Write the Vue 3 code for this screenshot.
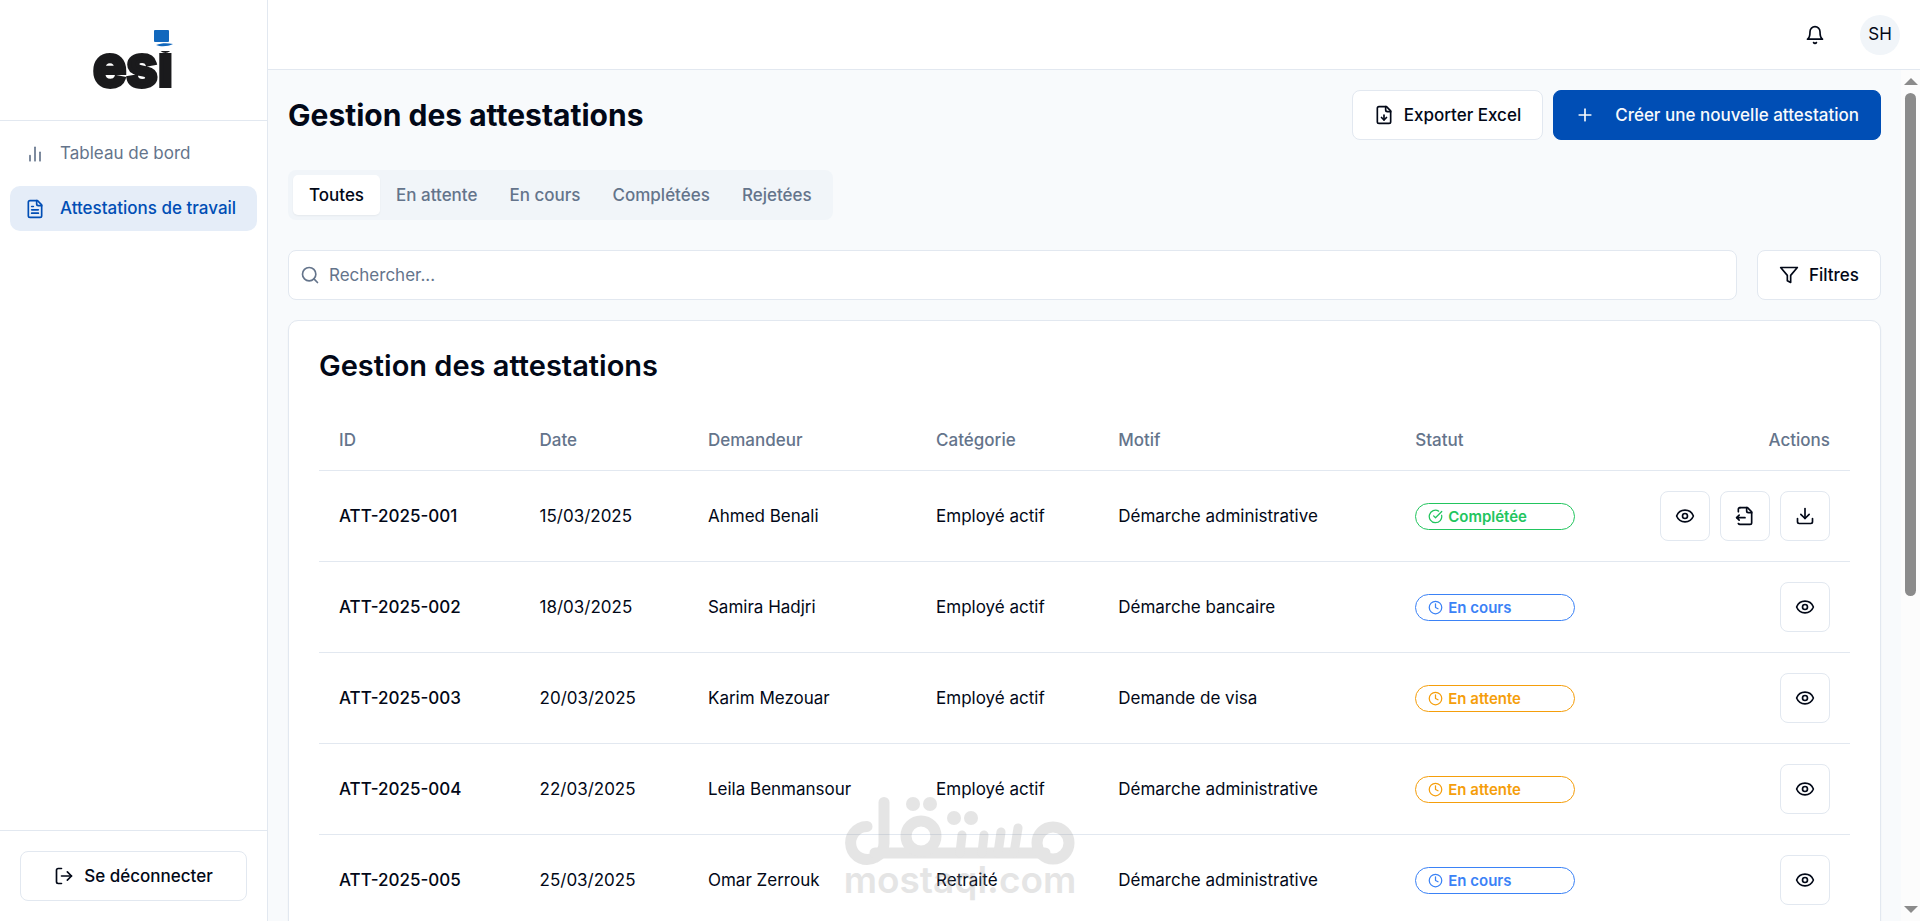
<template>
    <div class="layout">
        <aside class="sidebar">
            <div class="brand">
                <svg class="logo" viewBox="0 0 90 80" role="img" aria-label="esi">
                    <text x="4" y="66" class="logo-text">esi</text>
                    <rect x="64" y="6" width="24" height="25" fill="#fff" />
                    <rect x="65" y="10" width="15" height="12" rx="1" fill="#1268bd" />
                    <path d="M67 25c6-2.500 12-2 17-1-5 2.500-12 3-17 1z" fill="#1268bd" />
                </svg>
            </div>
            <nav class="nav">
                <a v-for="link in links" :key="link.label" href="#" class="nav-link" :class="{ active: link.active }">
                    <svg class="icon" viewBox="0 0 24 24">
                        <path v-for="d in icons[link.icon]" :key="d" :d="d" />
                    </svg>
                    {{ link.label }}
                </a>
            </nav>
            <div class="sidebar-footer">
                <button type="button" class="btn btn-block">
                    <svg class="icon" viewBox="0 0 24 24">
                        <path v-for="d in icons.logout" :key="d" :d="d" />
                    </svg>
                    Se déconnecter
                </button>
            </div>
        </aside>

        <div class="page">
            <header class="topbar">
                <button type="button" class="bell" aria-label="Notifications">
                    <svg class="icon" viewBox="0 0 24 24">
                        <path v-for="d in icons.bell" :key="d" :d="d" />
                    </svg>
                </button>
                <button type="button" class="avatar">SH</button>
            </header>

            <div class="body">
                <main class="content">
                    <div class="heading">
                        <h1>Gestion des attestations</h1>
                        <div class="heading-actions">
                            <button type="button" class="btn">
                                <svg class="icon" viewBox="0 0 24 24">
                                    <path v-for="d in icons.fileDown" :key="d" :d="d" />
                                </svg>
                                Exporter Excel
                            </button>
                            <button type="button" class="btn btn-primary">
                                <svg class="icon" viewBox="0 0 24 24">
                                    <path v-for="d in icons.plus" :key="d" :d="d" />
                                </svg>
                                Créer une nouvelle attestation
                            </button>
                        </div>
                    </div>

                    <div class="tabs" role="tablist">
                        <button v-for="tab in tabs" :key="tab" type="button" role="tab" class="tab"
                            :class="{ active: tab === activeTab }" :aria-selected="tab === activeTab"
                            @click="activeTab = tab">
                            {{ tab }}
                        </button>
                    </div>

                    <div class="toolbar">
                        <label class="search">
                            <svg class="icon" viewBox="0 0 24 24">
                                <circle cx="11" cy="11" r="8" />
                                <path d="m21 21-4.300-4.300" />
                            </svg>
                            <input v-model="search" type="search" placeholder="Rechercher..." aria-label="Rechercher">
                        </label>
                        <button type="button" class="btn">
                            <svg class="icon" viewBox="0 0 24 24">
                                <path v-for="d in icons.filter" :key="d" :d="d" />
                            </svg>
                            Filtres
                        </button>
                    </div>

                    <section class="card">
                        <h2>Gestion des attestations</h2>
                        <table class="table">
                            <colgroup>
                                <col class="col-id">
                                <col class="col-date">
                                <col class="col-name">
                                <col class="col-category">
                                <col class="col-reason">
                                <col class="col-status">
                                <col>
                            </colgroup>
                            <thead>
                                <tr>
                                    <th>ID</th>
                                    <th>Date</th>
                                    <th>Demandeur</th>
                                    <th>Catégorie</th>
                                    <th>Motif</th>
                                    <th>Statut</th>
                                    <th class="right">Actions</th>
                                </tr>
                            </thead>
                            <tbody>
                                <tr v-for="row in rows" :key="row.id">
                                    <td class="id">{{ row.id }}</td>
                                    <td>{{ row.date }}</td>
                                    <td>{{ row.name }}</td>
                                    <td>{{ row.category }}</td>
                                    <td>{{ row.reason }}</td>
                                    <td>
                                        <span class="badge" :class="statuses[row.status].color">
                                            <svg class="icon" viewBox="0 0 24 24">
                                                <path v-for="d in icons[statuses[row.status].icon]" :key="d" :d="d" />
                                            </svg>
                                            {{ row.status }}
                                        </span>
                                    </td>
                                    <td>
                                        <div class="row-actions">
                                            <button v-for="action in statuses[row.status].actions" :key="action.icon"
                                                type="button" class="btn btn-icon" :aria-label="action.label">
                                                <svg class="icon" viewBox="0 0 24 24">
                                                    <path v-for="d in icons[action.icon]" :key="d" :d="d" />
                                                </svg>
                                            </button>
                                        </div>
                                    </td>
                                </tr>
                            </tbody>
                        </table>
                    </section>
                </main>

                <div class="scrollbar" aria-hidden="true">
                    <span class="arrow arrow-up"></span>
                    <div class="track">
                        <div class="thumb"></div>
                    </div>
                    <span class="arrow arrow-down"></span>
                </div>
            </div>
        </div>

        <div class="watermark">
            <svg viewBox="0 0 230 68">
                <g fill="none" stroke="currentColor" stroke-linecap="round" stroke-width="11">
                    <path d="M22 29.500a16.500 16.500 0 1 0 8 31c6-3 9-8 9-14V5.500" />
                    <path d="M30 56H200" />
                    <circle cx="76" cy="39" r="15" />
                    <circle cx="208" cy="46" r="16" />
                    <path d="M117 38l-2 18M139 38l-2 18M156 35l-3 21M173 31l-4 25" stroke-width="9" />
                </g>
                <g fill="currentColor">
                    <circle cx="68" cy="7" r="7" />
                    <circle cx="85" cy="7" r="7" />
                    <circle cx="109" cy="21" r="7" />
                    <circle cx="126" cy="21" r="7" />
                </g>
            </svg>
            <span>mostaql.com</span>
        </div>
    </div>
</template>

<script setup>
import { ref } from 'vue'

const icons = {
    chart: ['M18 20V10', 'M12 20V4', 'M6 20v-6'],
    file: [
        'M15 2H6a2 2 0 0 0-2 2v16a2 2 0 0 0 2 2h12a2 2 0 0 0 2-2V7Z',
        'M14 2v4a2 2 0 0 0 2 2h4',
        'M10 9H8',
        'M16 13H8',
        'M16 17H8'
    ],
    logout: ['M9 21H5a2 2 0 0 1-2-2V5a2 2 0 0 1 2-2h4', 'm16 17 5-5-5-5', 'M21 12H9'],
    bell: ['M6 8a6 6 0 0 1 12 0c0 7 3 9 3 9H3s3-2 3-9', 'M10.3 21a1.94 1.94 0 0 0 3.4 0'],
    fileDown: [
        'M15 2H6a2 2 0 0 0-2 2v16a2 2 0 0 0 2 2h12a2 2 0 0 0 2-2V7Z',
        'M14 2v4a2 2 0 0 0 2 2h4',
        'M12 18v-6',
        'm9 15 3 3 3-3'
    ],
    plus: ['M5 12h14', 'M12 5v14'],
    filter: ['M22 3H2l8 9.46V19l4 2v-8.54L22 3Z'],
    eye: [
        'M2.062 12.348a1 1 0 0 1 0-.696 10.75 10.75 0 0 1 19.876 0 1 1 0 0 1 0 .696 10.75 10.75 0 0 1-19.876 0',
        'M15 12a3 3 0 1 1-6 0 3 3 0 0 1 6 0'
    ],
    fileOutput: [
        'M14 2v4a2 2 0 0 0 2 2h4',
        'M4 7V4a2 2 0 0 1 2-2',
        'M4.063 20.999a2 2 0 0 0 2 1L18 22a2 2 0 0 0 2-2V7l-5-5H6',
        'm5 11-3 3',
        'm5 17-3-3h10'
    ],
    download: ['M21 15v4a2 2 0 0 1-2 2H5a2 2 0 0 1-2-2v-4', 'm7 10 5 5 5-5', 'M12 15V3'],
    check: ['M21.801 10A10 10 0 1 1 17 3.335', 'm9 11 3 3L22 4'],
    clock: ['M22 12a10 10 0 1 1-20 0 10 10 0 0 1 20 0', 'M12 6v6l4 2']
}

const links = [
    { label: 'Tableau de bord', icon: 'chart', active: false },
    { label: 'Attestations de travail', icon: 'file', active: true }
]

const tabs = ['Toutes', 'En attente', 'En cours', 'Complétées', 'Rejetées']
const activeTab = ref('Toutes')
const search = ref('')

const view = { icon: 'eye', label: 'Voir' }

const statuses = {
    'Complétée': {
        color: 'green',
        icon: 'check',
        actions: [view, { icon: 'fileOutput', label: 'Exporter' }, { icon: 'download', label: 'Télécharger' }]
    },
    'En cours': { color: 'blue', icon: 'clock', actions: [view] },
    'En attente': { color: 'orange', icon: 'clock', actions: [view] }
}

const rows = ref([
    { id: 'ATT-2025-001', date: '15/03/2025', name: 'Ahmed Benali', category: 'Employé actif', reason: 'Démarche administrative', status: 'Complétée' },
    { id: 'ATT-2025-002', date: '18/03/2025', name: 'Samira Hadjri', category: 'Employé actif', reason: 'Démarche bancaire', status: 'En cours' },
    { id: 'ATT-2025-003', date: '20/03/2025', name: 'Karim Mezouar', category: 'Employé actif', reason: 'Demande de visa', status: 'En attente' },
    { id: 'ATT-2025-004', date: '22/03/2025', name: 'Leila Benmansour', category: 'Employé actif', reason: 'Démarche administrative', status: 'En attente' },
    { id: 'ATT-2025-005', date: '25/03/2025', name: 'Omar Zerrouk', category: 'Retraité', reason: 'Démarche administrative', status: 'En cours' }
])
</script>

<style>
body {
    margin: 0;
}
</style>

<style scoped>
.layout {
    --primary: #004eb5;
    --text: #020817;
    --muted: #64748b;
    --border: #e2e8f0;
    position: relative;
    display: flex;
    height: 100vh;
    overflow: hidden;
    color: var(--text);
    background: #f8fafc;
    font-family: Inter, "Liberation Sans", sans-serif;
    font-size: 17px;
    line-height: 25px;
}

.layout * {
    box-sizing: border-box;
}

button,
input {
    font: inherit;
    color: inherit;
}

.icon {
    flex: none;
    width: 20px;
    height: 20px;
    fill: none;
    stroke: currentColor;
    stroke-width: 2;
    stroke-linecap: round;
    stroke-linejoin: round;
}

.btn {
    display: inline-flex;
    align-items: center;
    justify-content: center;
    gap: 10px;
    height: 50px;
    padding: 0 21px;
    border: 1px solid var(--border);
    border-radius: 8px;
    background: #fff;
    font-weight: 500;
    white-space: nowrap;
    cursor: pointer;
}

.btn-primary {
    gap: 20px;
    border-color: var(--primary);
    background: var(--primary);
    color: #f8fafc;
}

.btn-block {
    width: 100%;
}

.btn-icon {
    width: 50px;
    padding: 0;
}

/* Sidebar */
.sidebar {
    display: flex;
    flex: none;
    flex-direction: column;
    width: 268px;
    border-right: 1px solid var(--border);
    background: #fff;
}

.brand {
    display: flex;
    justify-content: center;
    padding: 20px;
    border-bottom: 1px solid var(--border);
}

.logo {
    width: 90px;
    height: 80px;
    overflow: visible;
}

.logo-text {
    fill: #1a1a1c;
    stroke: #1a1a1c;
    stroke-width: 4;
    font-family: Inter, "Liberation Sans", sans-serif;
    font-size: 56px;
    font-weight: 700;
}

.nav {
    display: flex;
    flex: 1;
    flex-direction: column;
    gap: 10px;
    padding: 10px;
}

.nav-link {
    display: flex;
    align-items: center;
    gap: 15px;
    padding: 10px 15px;
    border-radius: 10px;
    color: var(--muted);
    text-decoration: none;
    white-space: nowrap;
}

.nav-link.active {
    background: #e5edf8;
    color: var(--primary);
    font-weight: 500;
}

.sidebar-footer {
    padding: 20px;
    border-top: 1px solid var(--border);
}

/* Page */
.page {
    display: flex;
    flex: 1;
    flex-direction: column;
    min-width: 0;
}

.topbar {
    display: flex;
    flex: none;
    align-items: center;
    justify-content: flex-end;
    gap: 20px;
    height: 70px;
    padding: 0 20px;
    border-bottom: 1px solid var(--border);
    background: #fff;
}

.bell {
    display: flex;
    align-items: center;
    justify-content: center;
    width: 50px;
    height: 50px;
    padding: 0;
    border: 0;
    background: none;
}

.avatar {
    width: 40px;
    height: 40px;
    padding: 0;
    border: 0;
    border-radius: 50%;
    background: #f1f5f9;
}

.body {
    display: flex;
    flex: 1;
    min-height: 0;
}

.content {
    flex: 1;
    min-width: 0;
    padding: 20px;
    overflow: hidden;
}

.heading {
    display: flex;
    align-items: center;
    justify-content: space-between;
    margin-bottom: 30px;
}

h1,
h2 {
    margin: 0;
    font-size: 30px;
    line-height: 30px;
}

h2 {
    font-size: 29px;
    font-weight: 600;
}

.heading-actions {
    display: flex;
    gap: 10px;
}

.tabs {
    display: flex;
    width: fit-content;
    height: 50px;
    padding: 5px;
    border-radius: 8px;
    background: #f1f5f9;
}

.tab {
    padding: 0 16px;
    border: 0;
    border-radius: 5px;
    background: none;
    color: var(--muted);
    font-weight: 500;
    cursor: pointer;
}

.tab.active {
    background: #fff;
    color: var(--text);
    box-shadow: 0 1px 2px rgba(0, 0, 0, 0.05);
}

.toolbar {
    display: flex;
    gap: 20px;
    margin: 30px 0 20px;
}

.search {
    display: flex;
    flex: 1;
    align-items: center;
    gap: 9px;
    height: 50px;
    padding: 0 11px;
    border: 1px solid var(--border);
    border-radius: 8px;
    background: #fff;
}

.search .icon {
    color: var(--muted);
}

.search input {
    flex: 1;
    padding: 0;
    border: 0;
    outline: 0;
    background: none;
}

.search input::placeholder {
    color: var(--muted);
    opacity: 1;
}

.card {
    padding: 30px;
    border: 1px solid var(--border);
    border-radius: 10px;
    background: #fff;
    box-shadow: 0 1px 2px rgba(0, 0, 0, 0.05);
}

/* Table */
.table {
    width: 100%;
    margin-top: 30px;
    border-collapse: separate;
    border-spacing: 0;
    table-layout: fixed;
}

.col-id {
    width: 13.1%;
}

.col-date {
    width: 11%;
}

.col-name {
    width: 14.9%;
}

.col-category {
    width: 11.9%;
}

.col-reason {
    width: 19.4%;
}

.col-status {
    width: 15%;
}

th {
    height: 60px;
    padding: 0 20px;
    border-bottom: 1px solid var(--border);
    color: var(--muted);
    font-weight: 500;
    text-align: left;
}

th.right {
    text-align: right;
}

td {
    height: 91px;
    padding: 0 20px;
    border-bottom: 1px solid var(--border);
    white-space: nowrap;
}

.id {
    font-weight: 500;
}

.badge {
    display: flex;
    align-items: center;
    gap: 5px;
    width: 160px;
    height: 27px;
    padding: 0 12px;
    border: 1px solid currentColor;
    border-radius: 14px;
    font-size: 15px;
    font-weight: 600;
}

.badge .icon {
    width: 15px;
    height: 15px;
}

.green {
    color: #22c55e;
}

.blue {
    color: #3b82f6;
}

.orange {
    color: #f59e0b;
}

.row-actions {
    display: flex;
    justify-content: flex-end;
    gap: 10px;
}

/* Scrollbar */
.scrollbar {
    display: flex;
    flex: none;
    flex-direction: column;
    align-items: center;
    width: 19px;
    padding: 8px 0;
    background: #fcfcfc;
}

.arrow {
    border: 7px solid transparent;
}

.arrow-up {
    border-top-width: 0;
    border-bottom-color: #8b8b8b;
}

.arrow-down {
    border-bottom-width: 0;
    border-top-color: #8b8b8b;
}

.track {
    flex: 1;
    width: 11px;
    margin: 8px 0;
}

.thumb {
    height: 62.5%;
    border-radius: 6px;
    background: #8b8b8b;
}

/* Watermark over the page */
.watermark {
    position: absolute;
    bottom: 26px;
    left: 50%;
    display: flex;
    flex-direction: column;
    align-items: center;
    width: 230px;
    margin-left: -115px;
    color: #999;
    opacity: 0.25;
    pointer-events: none;
}

.watermark svg {
    width: 100%;
    overflow: visible;
}

.watermark span {
    font-size: 37px;
    font-weight: 600;
    line-height: 30px;
}
</style>
